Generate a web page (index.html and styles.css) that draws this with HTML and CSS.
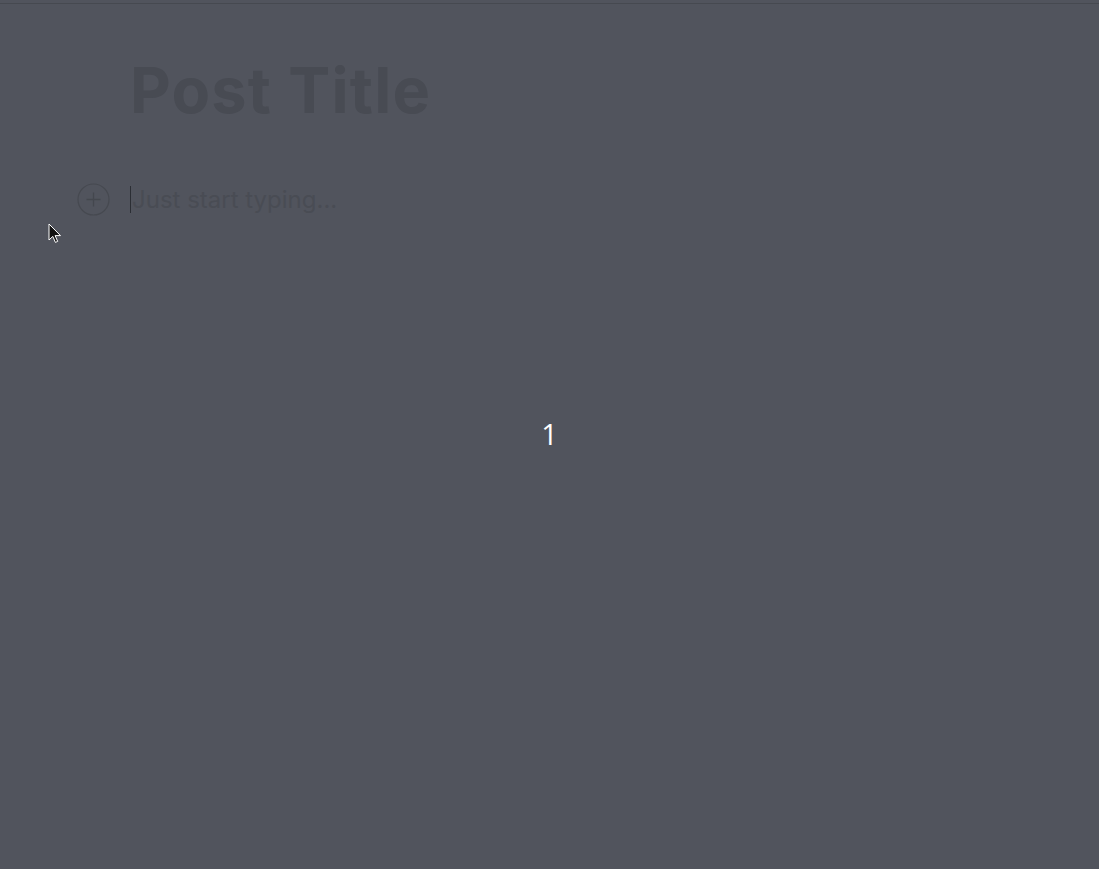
FILE: index.html
```html
<!DOCTYPE html>
<html>
<head>
<meta charset="utf-8">
<link rel="stylesheet" href="styles.css">
</head>
<body>
<div class="topline"></div>
<main class="editor">
  <h1 class="title">Post Title</h1>
  <div class="row">
    <span class="plus">
      <svg width="33" height="33" viewBox="0 0 33 33"><circle cx="16.5" cy="16.5" r="15.5" fill="none" stroke="#464950" stroke-width="1.2"/><path d="M16.5 9.5v14M9.5 16.5h14" stroke="#44474e" stroke-width="1.3"/></svg>
    </span>
    <span class="caret"></span>
    <span class="placeholder">Just start typing...</span>
  </div>
</main>
<div class="counter">1</div>
<svg class="cursor" width="14" height="22" viewBox="0 0 14 22"><path d="M1 1v16l3.8-3.6 2.6 6 2.3-1-2.6-5.8H12.5z" fill="#111" stroke="#fff" stroke-width="1"/></svg>
</body>
</html>
```
FILE: styles.css
```css
html, body {
  margin: 0;
  height: 100%;
}
body {
  background: #51545d;
  font-family: Inter, "Noto Sans", sans-serif;
  position: relative;
  overflow: hidden;
}
.topline {
  height: 3px;
  border-bottom: 1px solid #464950;
}
.editor {
  padding-left: 130px;
  padding-top: 46px;
}
.title {
  margin: 0;
  font-size: 63px;
  font-weight: 700;
  line-height: 80px;
  color: #484b53;
  letter-spacing: 1.2px;
}
.row {
  display: flex;
  align-items: center;
  margin-top: 54px;
  position: relative;
  height: 30px;
}
.plus {
  position: absolute;
  left: -53px;
  top: -1px;
  width: 33px;
  height: 33px;
}
.caret {
  width: 1px;
  height: 27px;
  background: #2b2e34;
  margin-right: 1px;
}
.placeholder {
  font-size: 24px;
  color: #494c54;
  letter-spacing: 0;
}
.counter {
  position: absolute;
  left: 0;
  right: 0;
  top: 416px;
  text-align: center;
  color: #ffffff;
  font-size: 29px;
  font-family: "Open Sans", "Noto Sans", sans-serif;
  line-height: 36px;
}
.cursor {
  position: absolute;
  left: 48px;
  top: 223px;
}
```
